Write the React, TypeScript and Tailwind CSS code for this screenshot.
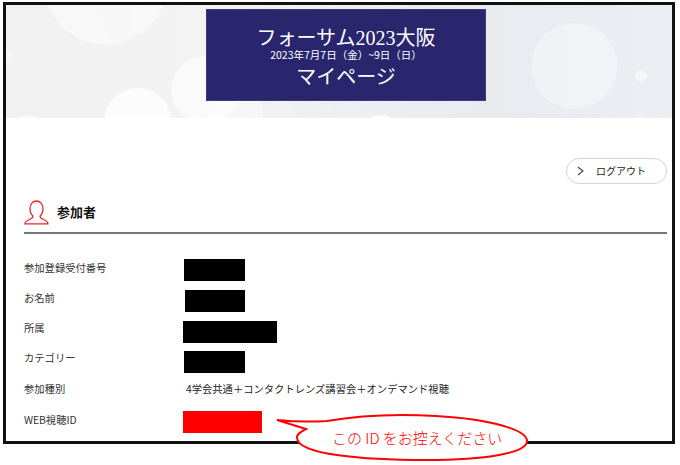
import React from "react";

const font = { fontFamily: '"Noto Sans CJK JP", "Noto Sans", sans-serif' };

const rows = [
  { label: "参加登録受付番号", block: "w-[61px] h-[22px] bg-black", height: "h-[30px]", lift: "mb-[4px]" },
  { label: "お名前", block: "ml-px w-[60px] h-[22px] bg-black", height: "h-[32px]", lift: "mb-[6px]" },
  { label: "所属", block: "-ml-px w-[94px] h-[22px] bg-black", height: "h-[30px]", lift: "mb-[8px]" },
  { label: "カテゴリー", block: "w-[61px] h-[22px] bg-black", height: "h-[30px]", lift: "mb-[8px]" },
  { label: "参加種別", text: "4学会共通＋コンタクトレンズ講習会＋オンデマンド視聴", height: "h-[26px]", lift: "mb-[2px]" },
  { label: "WEB視聴ID", block: "-ml-px w-[79px] h-[22px] bg-[#ff0000]", height: "h-[38px]", lift: "mb-[4px]" },
];

const HeroBackground = () => (
  <svg
    className="absolute inset-0 w-full h-full"
    viewBox="0 0 668 113"
    preserveAspectRatio="none"
  >
    <defs>
      <linearGradient id="hero" x1="0" y1="0" x2="1" y2="0">
        <stop offset="0" stopColor="#efefef" />
        <stop offset="0.3" stopColor="#f3f3f4" />
        <stop offset="0.72" stopColor="#e9ebef" />
        <stop offset="1" stopColor="#ebeef3" />
      </linearGradient>
    </defs>
    <rect width="668" height="113" fill="url(#hero)" />
    <circle cx="100" cy="-22" r="62" fill="#ffffff" opacity="0.45" />
    <circle cx="30" cy="55" r="78" fill="#ffffff" opacity="0.12" />
    <circle cx="0" cy="52" r="8" fill="#ffffff" opacity="0.3" />
    <circle cx="132" cy="117" r="34" fill="#ffffff" opacity="0.75" />
    <circle cx="200" cy="85" r="34" fill="#ffffff" opacity="0.6" />
    <circle cx="22" cy="127" r="17" fill="#ffffff" opacity="0.6" />
    <circle cx="230" cy="110" r="28" fill="#ffffff" opacity="0.4" />
    <circle cx="376" cy="130" r="20" fill="#ffffff" opacity="0.8" />
    <circle cx="519" cy="130" r="16" fill="#ffffff" opacity="0.8" />
    <circle cx="570" cy="61" r="43" fill="#ffffff" opacity="0.35" />
    <circle cx="637" cy="71" r="6" fill="#ffffff" opacity="0.45" />
    <circle cx="637" cy="112" r="5" fill="#ffffff" opacity="0.25" />
  </svg>
);

const UserIcon = () => (
  <svg width="25" height="25" viewBox="0 0 25 25" fill="none" stroke="#e8262a" strokeWidth="1.3">
    <path d="M9 16.2c-.2 1.800-1.800 2.600-3.600 3.300-2.200.8-4 1.600-4.400 4.300h23c-.4-2.700-2.200-3.500-4.400-4.300-1.800-.7-3.400-1.500-3.600-3.300 1.900-1.800 3-4.600 3-7.700C19 4.200 16.300 1 12.500 1S6 4.200 6 8.500c0 3.100 1.100 5.900 3 7.700z" />
  </svg>
);

const Callout = () => (
  <div className="absolute left-[276px] top-[413px] w-[254px] h-[50px]">
    <svg className="absolute inset-0" width="254" height="50" viewBox="0 0 254 50" fill="#ffffff">
      <path
        d="M1 7 C20 9 35 9 51 8 C85 2 125 1 160 3 C215 6 251 17 251 28 C251 40 210 47 150 47 C90 47 20 42 21 24 C21 21 26 18 30 16 Z"
        stroke="#ff0000"
        strokeWidth="2"
      />
    </svg>
    <span
      className="absolute left-[56px] top-[14px] text-[15px] leading-[22px] font-light text-[#ff0000] whitespace-nowrap"
      style={font}
    >
      この ID をお控えください
    </span>
  </div>
);

export default function App() {
  return (
    <div className="relative w-[680px] h-[465px] bg-white overflow-hidden pt-[2px] pl-[3px]" style={font}>
      <div className="w-[672px] h-[442px] border-[3px] border-[#111111] bg-white overflow-hidden">
        {/* Header */}
        <div className="relative h-[113px] pt-[4px] flex justify-center">
          <HeroBackground />
          <div className="relative ml-[14px] w-[280px] h-[92px] bg-[#29266e] border border-[#3c3a80] flex flex-col items-center text-white">
            <div className="mt-[18px] text-[20px] leading-[20px] whitespace-nowrap" style={{ fontFamily: '"Liberation Serif", "Noto Sans CJK JP", serif' }}>
              フォーサム2023大阪
            </div>
            <div className="mt-px text-[10.5px] leading-[12px] whitespace-nowrap">2023年7月7日（金）~9日（日）</div>
            <div className="mt-[5px] text-[20px] leading-[20px] whitespace-nowrap">マイページ</div>
          </div>
        </div>

        {/* Body */}
        <div className="pl-[18px] pr-[5px]">
          <div className="flex justify-end pt-[40px]">
            <button className="w-[101px] h-[26px] rounded-full border-[1.5px] border-[#d4d4d4] flex items-center pl-[10px] bg-white">
              <svg width="7" height="10" viewBox="0 0 7 10" fill="none" stroke="#444444" strokeWidth="1.1">
                <path d="M1 1l5 4-5 4" />
              </svg>
              <span className="ml-[12px] text-[10px] leading-none text-[#222222]">ログアウト</span>
            </button>
          </div>

          <div className="mt-[16px] h-[34px] flex items-start border-b-2 border-[#777777]">
            <UserIcon />
            <h2 className="ml-[8px] mt-[3px] text-[13px] leading-[18px] font-bold text-[#111111]">参加者</h2>
          </div>

          <div className="mt-[21px]">
            {rows.map((row) => (
              <div key={row.label} className={`flex items-center ${row.height}`}>
                <div className={`w-[160px] text-[10.3px] leading-none text-[#333333] whitespace-nowrap ${row.lift}`}>{row.label}</div>
                {row.block ? (
                  <div className={row.block} />
                ) : (
                  <div className={`ml-[2px] text-[10.3px] leading-none text-[#222222] whitespace-nowrap ${row.lift}`}>{row.text}</div>
                )}
              </div>
            ))}
          </div>
        </div>
      </div>
      <Callout />
    </div>
  );
}
